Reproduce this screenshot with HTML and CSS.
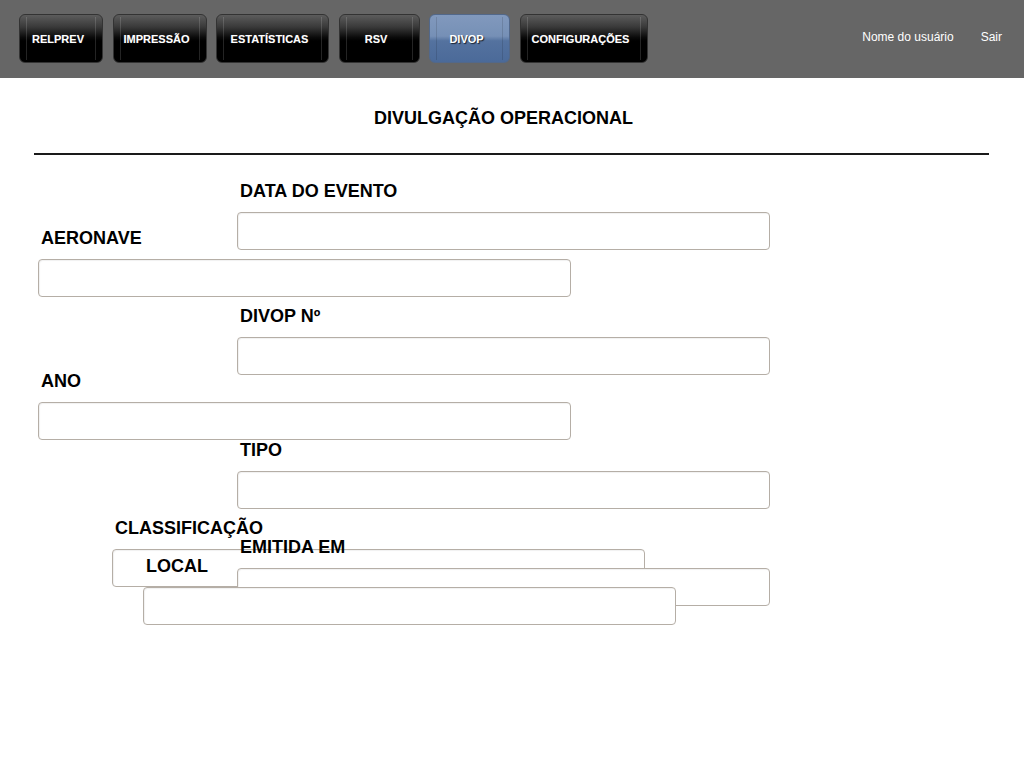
FILE: index.html
```html
<!DOCTYPE html>
<html lang="pt-BR">
<head>
<meta charset="utf-8">
<title>DIVOP</title>
<link rel="stylesheet" href="styles.css">
</head>
<body>
<header class="topbar">
  <nav class="menu">
    <a class="menu-btn w-relprev" href="#">RELPREV</a>
    <a class="menu-btn w-impressao" href="#">IMPRESSÃO</a>
    <a class="menu-btn w-estat" href="#">ESTATÍSTICAS</a>
    <a class="menu-btn w-rsv" href="#">RSV</a>
    <a class="menu-btn w-divop active" href="#">DIVOP</a>
    <a class="menu-btn w-config" href="#">CONFIGURAÇÕES</a>
  </nav>
  <div class="user">
    <a class="user-link" href="#">Nome do usuário</a>
    <a class="user-link" href="#">Sair</a>
  </div>
</header>
<main class="page">
  <h1 class="title">DIVULGAÇÃO OPERACIONAL</h1>
  <hr class="divider">
  <form class="form">
    <div class="field f-data"><label class="lbl">DATA DO EVENTO</label><input class="inp" type="text"></div>
    <div class="field f-aeronave"><label class="lbl">AERONAVE</label><input class="inp" type="text"></div>
    <div class="field f-divop"><label class="lbl">DIVOP Nº</label><input class="inp" type="text"></div>
    <div class="field f-ano"><label class="lbl">ANO</label><input class="inp" type="text"></div>
    <div class="field f-tipo"><label class="lbl">TIPO</label><input class="inp" type="text"></div>
    <div class="field f-classif"><label class="lbl">CLASSIFICAÇÃO</label><input class="inp" type="text"></div>
    <div class="field f-emitida"><label class="lbl">EMITIDA EM</label><input class="inp" type="text"></div>
    <div class="field f-local"><label class="lbl">LOCAL</label><input class="inp" type="text"></div>
  </form>
</main>
</body>
</html>
```

FILE: styles.css
```css
html, body {
  margin: 0;
  padding: 0;
  background: #fff;
  font-family: "Liberation Sans", Arial, sans-serif;
  color: #000;
}

.topbar {
  height: 78px;
  background: #666;
  display: flex;
  align-items: flex-start;
  box-sizing: border-box;
  padding: 14px 22px 0 19px;
}

.menu {
  display: flex;
  gap: 9.5px;
}

.menu-btn {
  position: relative;
  box-sizing: border-box;
  height: 49px;
  display: flex;
  align-items: center;
  justify-content: center;
  padding-right: 6px;
  border: 1px solid #333;
  border-radius: 6px;
  background: linear-gradient(#5c5c5c 0%, #3a3a3a 25%, #0a0a0a 48%, #000 55%, #000 100%);
  color: #fff;
  font-size: 11px;
  font-weight: bold;
  text-decoration: none;
  text-shadow: 0 0 1px rgba(255,255,255,0.3);
}

.menu-btn::before {
  content: "";
  position: absolute;
  top: 2px;
  bottom: 2px;
  left: 6px;
  right: 6px;
  border-left: 1px solid rgba(255,255,255,0.14);
  border-right: 1px solid rgba(255,255,255,0.14);
}

.menu-btn.active {
  border-color: #52688a;
  background: linear-gradient(#8199bd 0%, #7690b6 45%, #54729f 55%, #4b6a99 100%);
  text-shadow: 1px 1px 1px rgba(0,0,0,0.7);
}

.menu-btn.active::before {
  border-left-color: rgba(0,0,0,0.12);
  border-right-color: rgba(0,0,0,0.12);
}

.w-relprev { width: 84px; }
.w-impressao { width: 94px; }
.w-estat { width: 113px; }
.w-rsv { width: 81px; }
.w-divop { width: 81px; }
.w-config { width: 128px; }

.user {
  margin-left: auto;
  display: flex;
  gap: 27px;
  padding-top: 16px;
}

.user-link {
  color: #fff;
  font-size: 12px;
  text-decoration: none;
}

.page {
  padding-top: 30px;
}

.title {
  margin: 0;
  font-size: 18px;
  line-height: 21px;
  font-weight: bold;
  text-align: center;
  padding-right: 17px;
}

.divider {
  margin: 24px 35px 0 34px;
  border: 0;
  height: 2px;
  background: #1a1a1a;
}

.form {
  position: relative;
  height: 500px;
}

.field {
  position: absolute;
  display: flex;
  flex-direction: column;
  align-items: flex-start;
}

.lbl {
  display: block;
  font-size: 18px;
  line-height: 20px;
  font-weight: bold;
  padding-left: 3px;
  margin-bottom: 11px;
  white-space: nowrap;
}

.inp {
  box-sizing: border-box;
  width: 533px;
  height: 38px;
  margin: 0;
  border: 1px solid #b5aea6;
  border-radius: 4px;
  background: #fff;
  box-shadow: inset 1px 1px 1px rgba(0,0,0,0.06);
  font-family: inherit;
}

.f-data { left: 237px; top: 26px; }
.f-aeronave { left: 38px; top: 73px; }
.f-divop { left: 237px; top: 151px; }
.f-ano { left: 38px; top: 216px; }
.f-tipo { left: 237px; top: 285px; }
.f-classif { left: 112px; top: 363px; }
.f-emitida { left: 237px; top: 382px; }
.f-local { left: 143px; top: 401px; }
```
